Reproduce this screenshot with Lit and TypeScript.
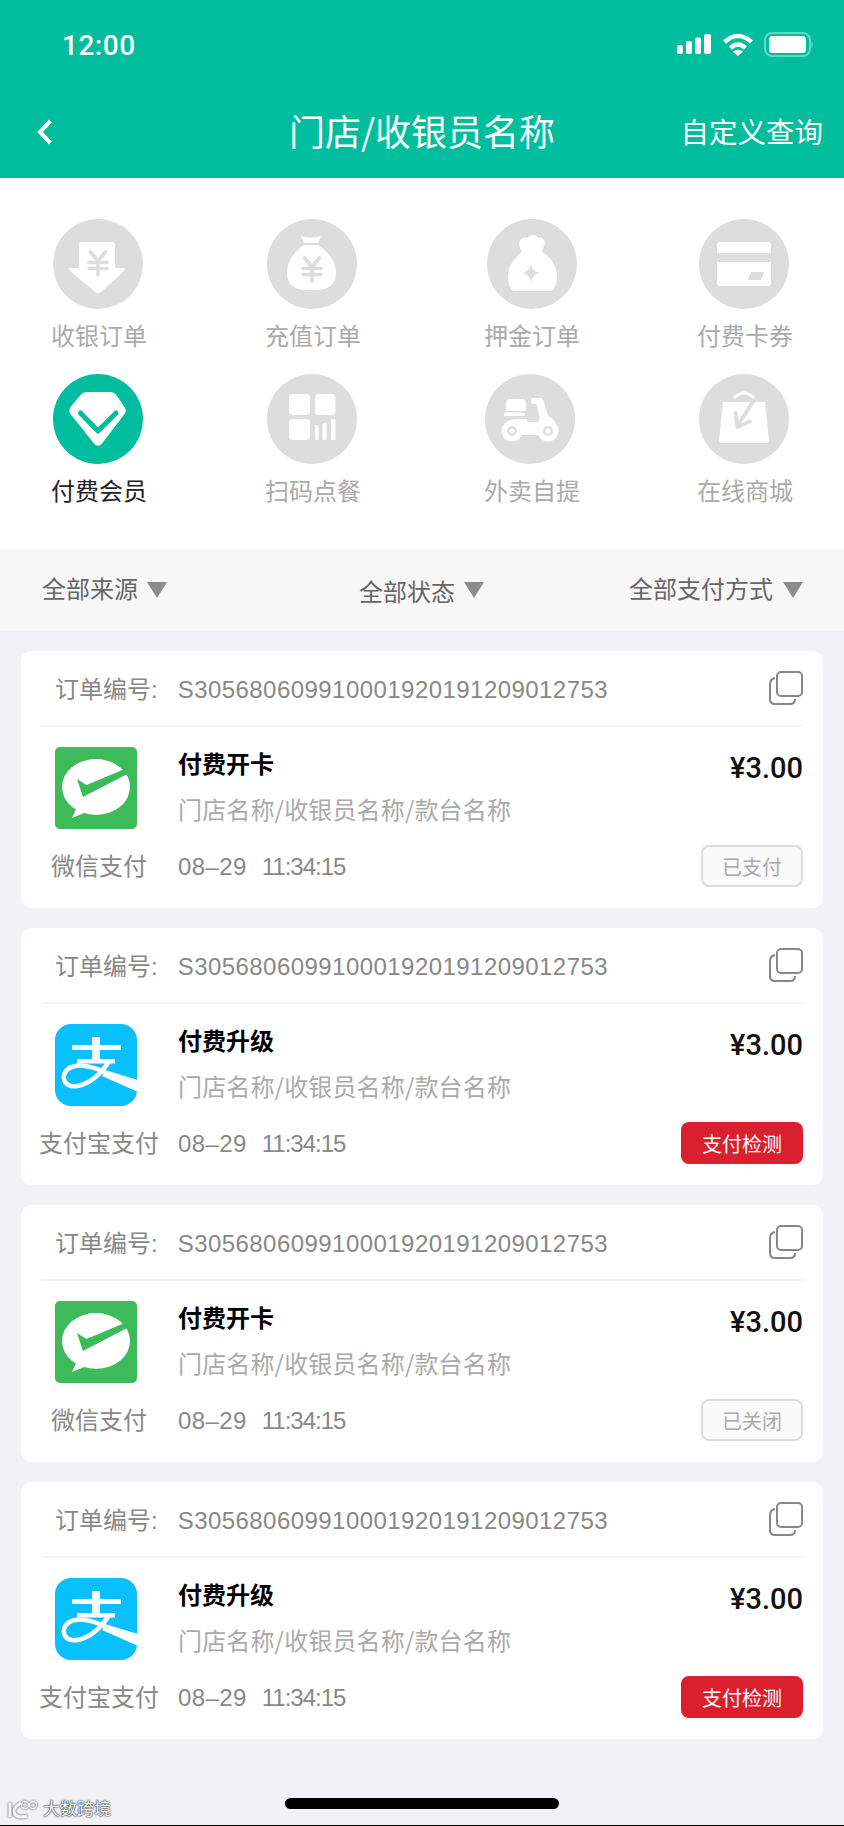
import { LitElement, html, css, svg } from "lit";
import { customElement } from "lit/decorators.js";

const GRAY = "#dddddd";
const TEAL = "#00bd9d";

const yen = (y: number) => svg`
  <g transform="translate(0 ${y})" fill="none" stroke="${GRAY}" stroke-width="3.6" stroke-linecap="round" stroke-linejoin="round">
    <path d="M37.5 0 L45 9 L52.5 0"/>
    <path d="M36 10.5 H54 M36 16.5 H54 M45 9 V23"/>
  </g>`;

const ICONS: Record<string, unknown> = {
  cash: svg`
    <path fill="#fff" d="M29 23 H59 a3 3 0 0 1 3 3 V49 H70 q3 0 1 3 L48 73 q-3 2.5 -6 0 L17 52 q-2 -3 1 -3 H26 V26 a3 3 0 0 1 3-3z"/>
    ${yen(33)}`,
  recharge: svg`
    <path fill="#fff" d="M34 17 Q44 20 54 17 L51 24 H37 Z"/>
    <path fill="#fff" d="M37 26 H51 C60 32 69 42 69 54 C69 66 60 71 50 71 H39 C28 71 20 66 20 54 C20 42 28 32 37 26Z"/>
    ${yen(39)}`,
  deposit: svg`
    <path fill="#fff" d="M33 29 C30 22 36 17 40 19 C43 15 49 15 51 19 C56 17 60 23 56 29 L55 33 C64 38 70 47 70 58 C70 64 68 69 65 72 H26 C23 69 21 64 21 58 C21 47 28 38 35 33Z"/>
    <path fill="${GRAY}" d="M44 45 Q45 53 53 54 Q45 55 44 63 Q43 55 35 54 Q43 53 44 45Z"/>`,
  card: svg`
    <path fill="#fff" d="M21 23 H69 a3 3 0 0 1 3 3 V34 H18 V26 a3 3 0 0 1 3-3z"/>
    <path fill="#fff" d="M18 43 H72 V64 a3 3 0 0 1-3 3 H21 a3 3 0 0 1-3-3z"/>
    <path fill="${GRAY}" d="M52 53 H65 L62 61 H49Z"/>`,
  member: svg`
    <path fill="#fff" d="M33 18 H58 q3 0 5 2.5 L71.5 33 q2.5 4 0 7 L49 69.5 q-4 4.5 -8 0 L17.5 40 q-2.5 -3 0 -7 L28 20.5 q2 -2.5 5 -2.5z"/>
    <path fill="none" stroke="${TEAL}" stroke-width="5" stroke-linecap="round" stroke-linejoin="round" d="M27.5 39 L45 57 L63 39"/>`,
  scan: svg`
    <g fill="#fff">
      <rect x="22" y="20" width="21" height="21" rx="4"/>
      <rect x="48" y="20" width="20.5" height="21" rx="4"/>
      <rect x="22" y="45" width="21" height="21" rx="4"/>
      <rect x="48" y="51" width="3.5" height="15" rx="1"/>
      <rect x="55.5" y="49" width="4" height="17" rx="1"/>
      <rect x="64" y="45" width="4.5" height="21" rx="1"/>
    </g>`,
  takeout: svg`
    <g fill="#fff">
      <path d="M25 25 H37 q4 0 4 4 V37 H21 V29 q0-4 4-4z"/>
      <rect x="19" y="38.5" width="21" height="3.5" rx="1.7"/>
      <path d="M20 52 C21 47 26 45 32 45 H41 L43 48 H52 C55 48 55 44 54 40 L51.5 30 H49 Q46 30 46 27 Q46 24 49 24 H55 Q58 24 59 28 L63 42 C68 44 71 48 72 54 L56 61 H34 Z"/>
      <circle cx="27" cy="57" r="10.5"/>
      <circle cx="63" cy="57" r="10.5"/>
    </g>
    <g fill="${GRAY}">
      <circle cx="27" cy="57" r="5"/>
      <circle cx="63" cy="57" r="5"/>
    </g>
    <g fill="#fff">
      <circle cx="27" cy="57" r="2.5"/>
      <circle cx="63" cy="57" r="2.5"/>
    </g>`,
  shop: svg`
    <path fill="none" stroke="#fff" stroke-width="3" d="M35 24 Q45 14 55 24"/>
    <path fill="#fff" d="M24 28 H66 L70 66 a3 3 0 0 1-3 3 H23 a3 3 0 0 1-3-3 Z"/>
    <path fill="none" stroke="${GRAY}" stroke-width="4" stroke-linecap="round" stroke-linejoin="round" d="M55 26 L39 51 M36.5 39 L38.5 53 L51 47.5"/>`,
};

const CATEGORIES = [
  { key: "cash", label: "收银订单" },
  { key: "recharge", label: "充值订单" },
  { key: "deposit", label: "押金订单", nudge: "nudge-r" },
  { key: "card", label: "付费卡券" },
  { key: "member", label: "付费会员", active: true },
  { key: "scan", label: "扫码点餐" },
  { key: "takeout", label: "外卖自提", nudge: "nudge-l" },
  { key: "shop", label: "在线商城" },
];

const ORDERS = [
  { pay: "wechat", payLabel: "微信支付", title: "付费开卡", status: "已支付", danger: false },
  { pay: "alipay", payLabel: "支付宝支付", title: "付费升级", status: "支付检测", danger: true },
  { pay: "wechat", payLabel: "微信支付", title: "付费开卡", status: "已关闭", danger: false },
  { pay: "alipay", payLabel: "支付宝支付", title: "付费升级", status: "支付检测", danger: true },
];

const wechatLogo = html`
  <svg class="logo" viewBox="0 0 82 82">
    <rect width="82" height="82" rx="5" fill="#3dbb5b"/>
    <ellipse cx="41" cy="40" rx="34" ry="28" fill="#fff"/>
    <path fill="#fff" d="M23 58 L17 71 L34 64Z"/>
    <path fill="#3dbb5b" d="M22 32 L31.5 38 L72 21 L76 25 L28 50Z"/>
  </svg>`;

const alipayLogo = html`
  <svg class="logo" viewBox="0 0 82 82">
    <defs><clipPath id="ali"><rect width="82" height="82" rx="16"/></clipPath></defs>
    <rect width="82" height="82" rx="16" fill="#09c0ff"/>
    <g clip-path="url(#ali)" fill="#fff">
      <rect x="17" y="21" width="49" height="5"/>
      <rect x="37" y="13" width="8" height="23"/>
      <rect x="22" y="35" width="38" height="4.5"/>
      <path d="M50 46 L83 56 V68 L47 52 Z"/>
      <path fill="none" stroke="#fff" stroke-width="4.5" d="M50 48 C38 43 28 40 20 42 C11 44 8 50 9 55 C10 61 16 63 22 62 C34 60 46 50 55 36"/>
    </g>
  </svg>`;

@customElement("app-root")
export class AppRoot extends LitElement {
  static styles = css`
    :host {
      display: block;
      width: 844px;
      font-family: "Liberation Sans", "Noto Sans CJK SC", sans-serif;
      font-size: 24px;
    }

    .page {
      position: relative;
      min-height: 1826px;
      box-sizing: border-box;
      background: #f1f1f6;
      border-bottom: 1px solid #000;
    }

    .header {
      background: #00bd9d;
      color: #fff;
      height: 178px;
    }

    .status {
      display: flex;
      align-items: center;
      justify-content: space-between;
      height: 86px;
      padding: 2px 30px 0 62px;
    }

    .time {
      font-family: Roboto, sans-serif;
      font-size: 28px;
      font-weight: 500;
      letter-spacing: 0.5px;
    }

    .nav {
      display: grid;
      grid-template-columns: 1fr auto 1fr;
      align-items: center;
      height: 88px;
      padding: 0 21px;
    }

    .back {
      display: block;
      margin: 0 0 1px 16px;
    }

    .title {
      padding-bottom: 5px;
      font-family: "Noto Sans CJK SC", sans-serif;
      font-size: 36px;
      line-height: 44px;
    }

    .custom {
      justify-self: end;
      padding-bottom: 4px;
      font-size: 28.5px;
    }

    .cats {
      display: grid;
      grid-template-columns: 214px 219px 213px 120px;
      row-gap: 20px;
      padding: 41px 0 40px 38px;
      background: #fff;
    }

    .cat {
      display: flex;
      flex-direction: column;
      align-items: center;
      width: 120px;
      color: #aaa;
    }

    .cat.active {
      color: #222;
    }

    .cat svg {
      display: block;
      width: 90px;
      height: 90px;
    }

    .nudge-r svg {
      margin-left: 2px;
    }

    .nudge-l svg {
      margin-right: 2px;
    }

    .cat span {
      margin-top: 11px;
      padding-left: 2px;
      line-height: 34px;
    }

    .filters {
      display: flex;
      align-items: center;
      height: 82px;
      padding: 0 41px 0 42px;
      background: #f7f7f8;
      color: #666;
    }

    .filter {
      display: flex;
      align-items: center;
      gap: 9px;
    }

    .filter span {
      padding-bottom: 6px;
    }

    .filter.mid {
      margin-left: 192px;
    }

    .filter.mid span {
      padding-bottom: 0;
    }

    .filter.end {
      gap: 10px;
      margin-left: auto;
    }

    .tri {
      width: 20px;
      height: 16px;
      background: #8c8c8c;
      clip-path: polygon(0 0, 100% 0, 50% 100%);
    }

    .list {
      display: flex;
      flex-direction: column;
      gap: 20px;
      padding: 20px 21px 0;
    }

    .order {
      height: 257px;
      padding: 0 20px;
      background: #fff;
      border-radius: 10px;
    }

    .order-head {
      display: flex;
      align-items: center;
      justify-content: space-between;
      height: 76px;
      box-sizing: border-box;
      padding-left: 14px;
      line-height: 34px;
      border-bottom: 2px solid #f3f3f3;
      color: #888;
    }

    .order-no {
      display: flex;
      align-items: center;
      gap: 20px;
      margin-top: 4px;
    }

    .serial {
      letter-spacing: 0.45px;
    }

    .copy {
      display: block;
      width: 34px;
      height: 34px;
    }

    .order-body {
      display: flex;
      padding-top: 20px;
    }

    .pay {
      display: flex;
      flex-direction: column;
      align-items: center;
      width: 116px;
      margin-right: 21px;
      color: #888;
    }

    .logo {
      display: block;
      width: 82px;
      height: 82px;
      margin-right: 6px;
    }

    .pay span {
      margin-top: 21px;
      line-height: 34px;
      white-space: nowrap;
    }

    .info {
      flex: 1;
    }

    .name {
      margin-top: 1px;
      font-weight: 700;
      line-height: 34px;
      color: #000;
    }

    .sub {
      margin-top: 10px;
      font-family: "Noto Sans CJK SC", sans-serif;
      line-height: 34px;
      letter-spacing: 0.15px;
      color: #aaa;
    }

    .when {
      display: flex;
      gap: 15px;
      margin-top: 24px;
      line-height: 34px;
      color: #888;
    }

    .day {
      letter-spacing: 0.4px;
    }

    .clock {
      letter-spacing: -1px;
    }

    .side {
      display: flex;
      flex-direction: column;
      align-items: flex-end;
      padding-top: 1px;
    }

    .price {
      font-family: Roboto, sans-serif;
      font-size: 29px;
      font-weight: 500;
      line-height: 40px;
      color: #111;
    }

    .badge {
      display: flex;
      align-items: center;
      justify-content: center;
      box-sizing: border-box;
      width: 102px;
      height: 42px;
      margin-top: 57px;
      font-size: 20px;
      color: #aaa;
      background: #fafafb;
      border: 2px solid #ddd;
      border-radius: 8px;
    }

    .badge.danger {
      width: 122px;
      color: #fff;
      background: #dc1f2e;
      border: none;
    }

    .foot {
      display: flex;
      justify-content: center;
      padding-top: 59px;
    }

    .home {
      width: 274px;
      height: 11px;
      background: #000;
      border-radius: 6px;
    }

    .mark {
      position: absolute;
      left: 7px;
      bottom: 5px;
      display: flex;
      align-items: center;
      gap: 1px;
      font-size: 17px;
      line-height: 20px;
      color: #f8f8fa;
      text-shadow: 0 0 2px #444, 0 0 1px #444, 0 0 1px #444;
    }

    .mark svg {
      display: block;
      width: 35px;
      height: 20px;
      filter: drop-shadow(0 0 1px #444);
    }
  `;

  render() {
    return html`
      <div class="page">
        <div class="header">
          <div class="status">
            <span class="time">12:00</span>
            ${this.renderStatusIcons()}
          </div>
          <div class="nav">
            <svg class="back" width="16" height="26" viewBox="0 0 16 26">
              <path d="M13.5 2 L3 13 L13.5 24" fill="none" stroke="#fff" stroke-width="4"/>
            </svg>
            <div class="title">门店/收银员名称</div>
            <div class="custom">自定义查询</div>
          </div>
        </div>

        <div class="cats">
          ${CATEGORIES.map((c) => html`
            <div class="cat ${c.active ? "active" : ""} ${c.nudge ?? ""}">
              <svg viewBox="0 0 90 90">
                <circle cx="45" cy="45" r="45" fill="${c.active ? TEAL : GRAY}"/>
                ${ICONS[c.key]}
              </svg>
              <span>${c.label}</span>
            </div>
          `)}
        </div>

        <div class="filters">
          <div class="filter"><span>全部来源</span><i class="tri"></i></div>
          <div class="filter mid"><span>全部状态</span><i class="tri"></i></div>
          <div class="filter end"><span>全部支付方式</span><i class="tri"></i></div>
        </div>

        <div class="list">
          ${ORDERS.map((o) => this.renderOrder(o))}
        </div>

        <div class="foot"><div class="home"></div></div>

        <div class="mark">
          <svg viewBox="0 0 35 20">
            <path d="M3 3 V17 M14 3 Q6 8 7 12 Q9 19 20 16" fill="none" stroke="#f8f8fa" stroke-width="3"/>
            <circle cx="18" cy="5" r="3.5" fill="none" stroke="#f8f8fa" stroke-width="1.5"/>
            <circle cx="26" cy="5" r="3.5" fill="none" stroke="#f8f8fa" stroke-width="1.5"/>
          </svg>
          大数跨境
        </div>
      </div>
    `;
  }

  private renderStatusIcons() {
    return html`
      <svg width="137" height="26" viewBox="0 0 137 26">
        <g fill="#fff">
          <rect x="0" y="13" width="6" height="9" rx="2"/>
          <rect x="9" y="9" width="6" height="13" rx="2"/>
          <rect x="18" y="5.5" width="6" height="16.5" rx="2"/>
          <rect x="27" y="2" width="7" height="20" rx="2"/>
        </g>
        <g transform="translate(46 1)">
          <path d="M1.5 9 Q15 -3 28.5 9" fill="none" stroke="#fff" stroke-width="4.5"/>
          <path d="M7.5 15 Q15 8 22.5 15" fill="none" stroke="#fff" stroke-width="4.5"/>
          <path d="M10 18.5 Q15 15 20 18.5 L15 23Z" fill="#fff"/>
        </g>
        <rect x="88" y="1" width="45" height="23" rx="7" fill="none" stroke="#fff" stroke-opacity=".4" stroke-width="2"/>
        <rect x="92" y="4" width="37" height="17" rx="3.5" fill="#fff"/>
        <path d="M134.5 9 q2.5 3.5 0 7z" fill="#fff" fill-opacity=".5"/>
      </svg>
    `;
  }

  private renderOrder(o: (typeof ORDERS)[number]) {
    return html`
      <div class="order">
        <div class="order-head">
          <div class="order-no">
            <span>订单编号:</span>
            <span class="serial">S305680609910001920191209012753</span>
          </div>
          <svg class="copy" viewBox="0 0 34 34" fill="none" stroke="#888" stroke-width="2">
            <rect x="8" y="1" width="25" height="24" rx="4"/>
            <path d="M6 7 Q1 8 1 13 V28 Q1 33 6 33 H21 Q26 33 26 28"/>
          </svg>
        </div>
        <div class="order-body">
          <div class="pay">
            ${o.pay === "wechat" ? wechatLogo : alipayLogo}
            <span>${o.payLabel}</span>
          </div>
          <div class="info">
            <div class="name">${o.title}</div>
            <div class="sub">门店名称/收银员名称/款台名称</div>
            <div class="when"><span class="day">08–29</span><span class="clock">11:34:15</span></div>
          </div>
          <div class="side">
            <div class="price">¥3.00</div>
            <div class="badge ${o.danger ? "danger" : ""}">${o.status}</div>
          </div>
        </div>
      </div>
    `;
  }
}
